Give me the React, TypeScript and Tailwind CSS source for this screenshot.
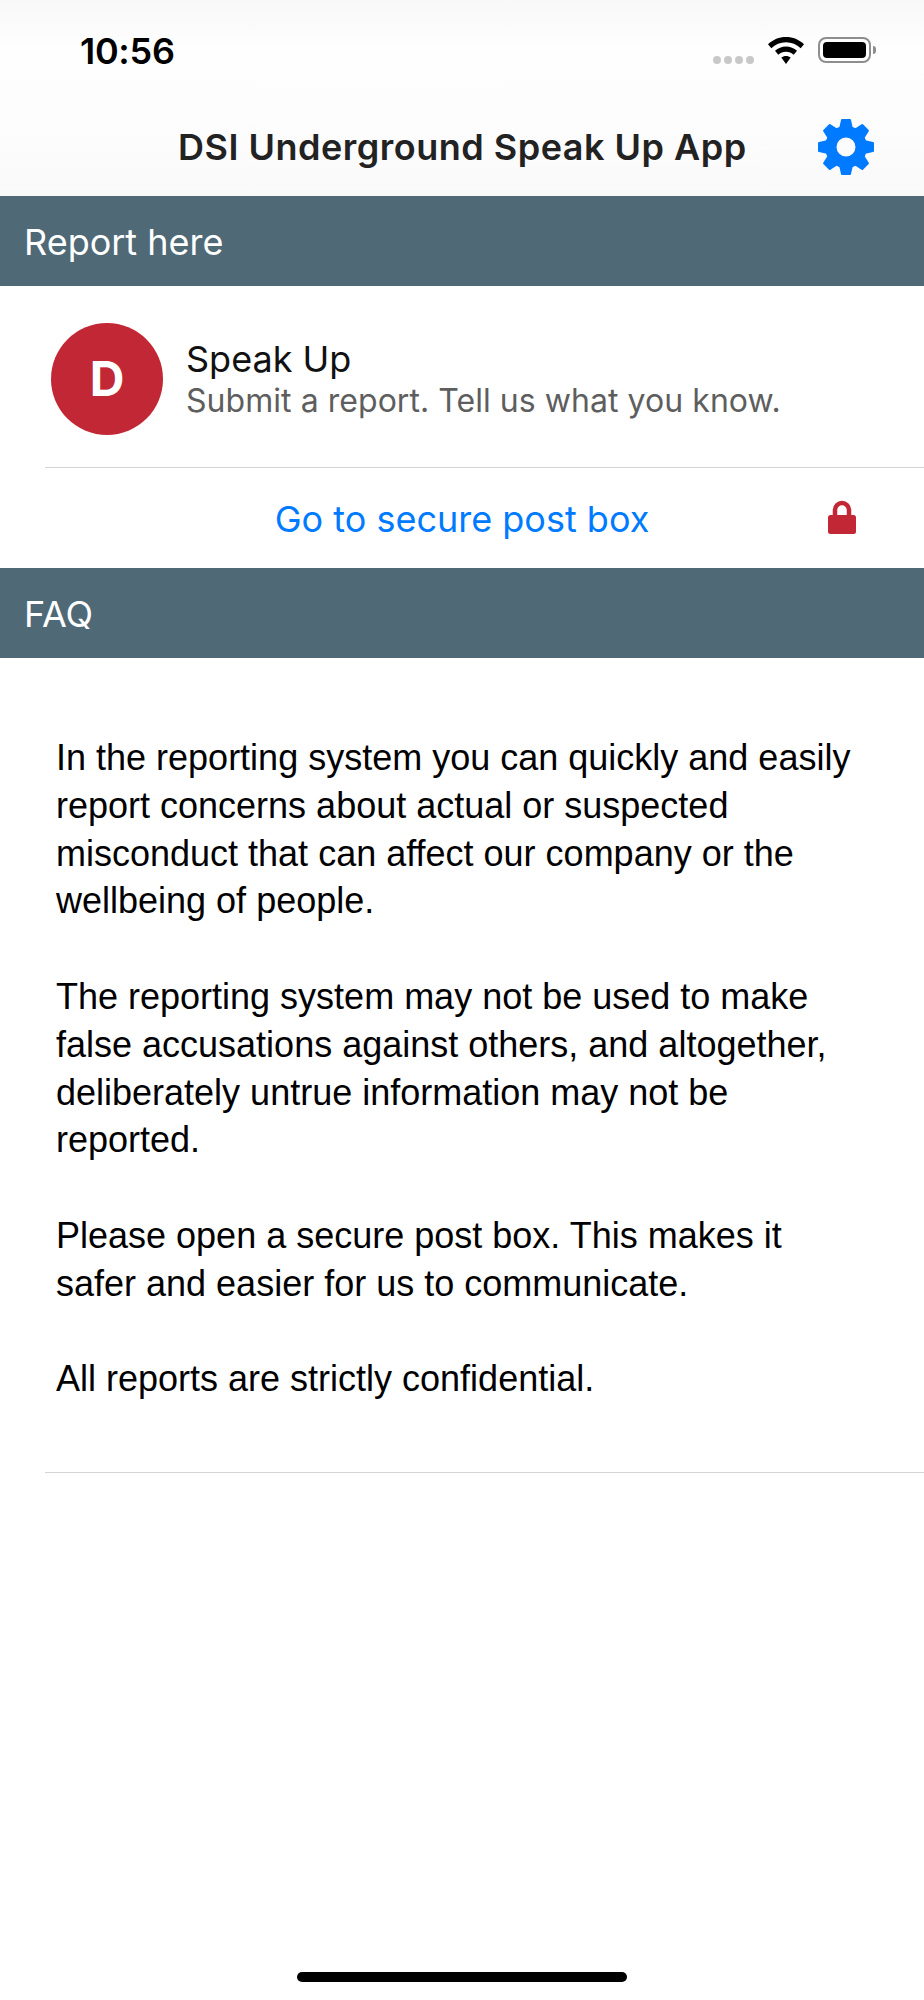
const font = "font-['Inter','Liberation_Sans',sans-serif]";

const paragraphs = [
  [
    "In the reporting system you can quickly and easily",
    "report concerns about actual or suspected",
    "misconduct that can affect our company or the",
    "wellbeing of people.",
  ],
  [
    "The reporting system may not be used to make",
    "false accusations against others, and altogether,",
    "deliberately untrue information may not be",
    "reported.",
  ],
  [
    "Please open a secure post box. This makes it",
    "safer and easier for us to communicate.",
  ],
  ["All reports are strictly confidential."],
];

function SectionBar({ label }: { label: string }) {
  return (
    <div className="flex h-[90px] items-center bg-[#4f6977] pt-[2px] pl-6 text-[36px] text-white">
      {label}
    </div>
  );
}

function StatusIcons() {
  return (
    <div className="flex items-start">
      <div className="mt-[19px] flex gap-[3px]">
        {[0, 1, 2, 3].map((i) => (
          <span key={i} className="h-2 w-2 rounded-full bg-[#c8c8c8]" />
        ))}
      </div>
      <svg viewBox="0 0 36 27" className="ml-[14px] h-[27px] w-9" fill="black">
        <path d="M18 0C11 0 5 2.600 0 7.200L3.300 11.200C7.300 7.500 12.400 5.300 18 5.300S28.700 7.500 32.700 11.200L36 7.200C31 2.600 25 0 18 0Z" />
        <path d="M18 9.500C13.800 9.500 10 11.100 7 13.800L10.300 17.700C12.400 15.900 15 14.800 18 14.800S23.600 15.900 25.700 17.700L29 13.800C26 11.100 22.200 9.500 18 9.500Z" />
        <path d="M18 19C16.200 19 14.600 19.600 13.300 20.600L18 27L22.700 20.600C21.400 19.600 19.800 19 18 19Z" />
      </svg>
      <div className="ml-[14px] flex items-center">
        <div className="flex h-[26px] w-[53px] items-center rounded-[8px] border-2 border-[#8e8e8e] p-[3px]">
          <div className="h-full w-full rounded-[4px] bg-black" />
        </div>
        <div className="ml-[2px] h-2 w-[3px] rounded-r-full bg-[#8e8e8e]" />
      </div>
    </div>
  );
}

function Gear() {
  const teeth = [0, 45, 90, 135, 180, 225, 270, 315];
  return (
    <svg viewBox="0 0 56 56" className="h-14 w-14" fill="#007aff">
      {teeth.map((deg) => (
        <path
          key={deg}
          d="M23 1Q23 0 24 0H32Q33 0 33 1L35.500 12H20.500Z"
          transform={`rotate(${deg} 28 28)`}
        />
      ))}
      <path
        fillRule="evenodd"
        d="M28 7a21 21 0 1 0 0 42a21 21 0 1 0 0-42ZM28 18.500a9.500 9.500 0 1 1 0 19a9.500 9.500 0 1 1 0-19Z"
      />
    </svg>
  );
}

function Lock() {
  return (
    <svg viewBox="0 0 28 34" className="h-[34px] w-7">
      <path d="M7 15V10a7 7 0 0 1 14 0v5" fill="none" stroke="#c22736" strokeWidth="4.500" />
      <rect x="0" y="15" width="28" height="19" rx="2.500" fill="#c22736" />
    </svg>
  );
}

export default function App() {
  return (
    <div className={`flex min-h-[2000px] flex-col bg-white ${font}`}>
      <header className="h-[196px] bg-[linear-gradient(180deg,#f8f8f8_0%,#fefefe_25%,#fdfdfd_60%,#f9f9f9_100%)]">
        <div className="flex items-start justify-between pt-[30px] pl-[80px] pr-[48px]">
          <span className="text-[36px] leading-[42px] font-semibold tracking-[-0.3px] text-black">10:56</span>
          <div className="pt-[7px]">
            <StatusIcons />
          </div>
        </div>
        <div className="mt-[47px] flex items-center justify-between pr-[50px] pl-[178px]">
          <h1 className="text-[36px] leading-[56px] font-semibold tracking-[0.5px] text-[#222222]">
            DSI Underground Speak Up App
          </h1>
          <Gear />
        </div>
      </header>

      <SectionBar label="Report here" />

      <div className="flex h-[181px] items-center pt-[5px] pl-[51px]">
        <div className="flex h-28 w-28 items-center justify-center rounded-full bg-[#c22736] text-[48px] font-bold text-white">
          D
        </div>
        <div className="ml-[23px]">
          <p className="text-[36px] leading-[42px] text-[#111111]">Speak Up</p>
          <p className="mt-[1px] text-[32px] leading-[40px] tracking-[0.05px] text-[#5e5e5e]">
            Submit a report. Tell us what you know.
          </p>
        </div>
      </div>

      <div className="ml-[45px] h-px bg-[#d4d4d4]" />

      <div className="relative flex h-[100px] items-center justify-center pt-[2px] text-[36px] text-[#007aff]">
        Go to secure post box
        <div className="absolute top-[32px] right-[68px]">
          <Lock />
        </div>
      </div>

      <SectionBar label="FAQ" />

      <div className="flex flex-col gap-[47.800px] pt-[76px] pb-[69px] pl-[56px] font-['Liberation_Sans',Arial,sans-serif] text-[36px] leading-[47.800px] text-black">
        {paragraphs.map((lines) => (
          <p key={lines[0]}>
            {lines.map((line) => (
              <span key={line} className="block">
                {line}
              </span>
            ))}
          </p>
        ))}
      </div>

      <div className="ml-[45px] h-px bg-[#d4d4d4]" />

      <div className="mt-auto flex justify-center pb-[18px]">
        <div className="h-[10px] w-[330px] rounded-full bg-black" />
      </div>
    </div>
  );
}
